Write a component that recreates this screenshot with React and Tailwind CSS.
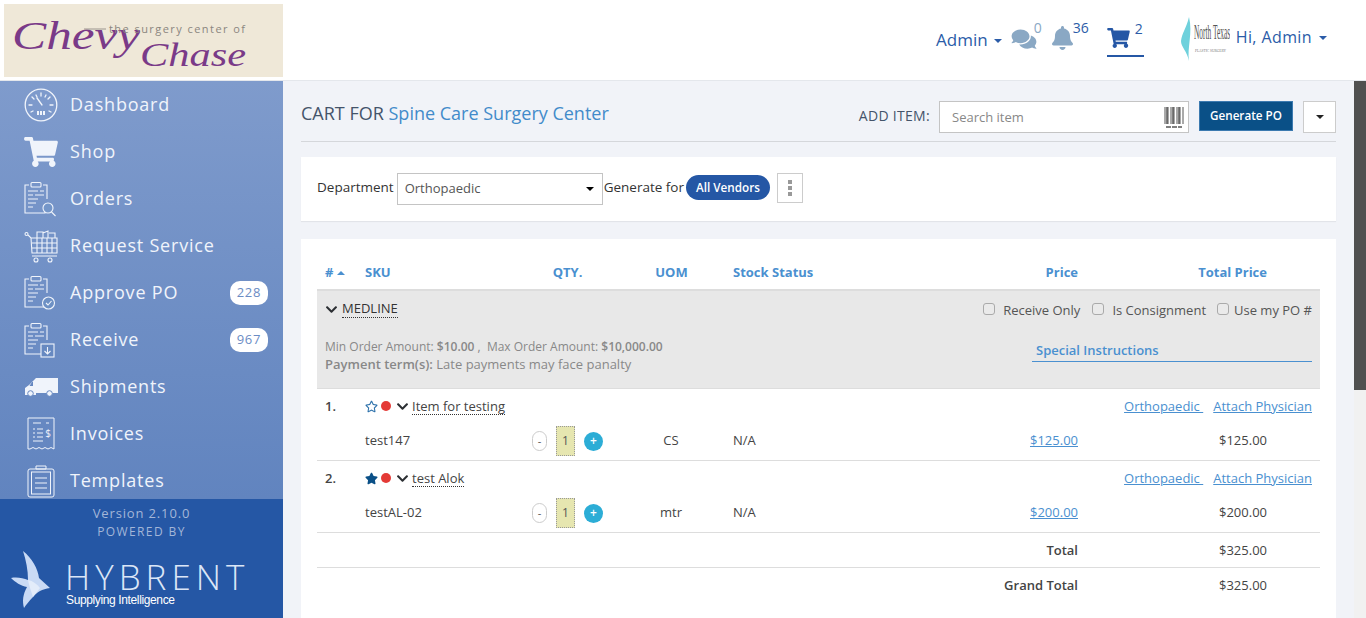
import { FaBell, FaChevronDown, FaComments, FaRegStar, FaShoppingCart, FaStar } from 'react-icons/fa'

const font = { fontFamily: '"Open Sans", "Noto Sans", sans-serif' }

function Clip({ children }) {
  return (
    <svg width="34" height="36" viewBox="4 0 34 36" fill="none" stroke="currentColor" strokeWidth="1.1" className="overflow-visible">
      <path d="M9 4H5v28h20v-6M23 4h4v14" />
      <rect x="11" y="1.500" width="10" height="4.500" rx="1" />
      <path d="M8 10h10M20 10h4M8 14h5M15 14h9M8 18h10M8 22h8M8 26h5" />
      {children}
    </svg>
  )
}

const navIcons = {
  dashboard: (
    <svg width="34" height="34" viewBox="0 0 34 34" fill="none" stroke="currentColor" strokeWidth="1.3">
      <circle cx="17" cy="17" r="15.800" />
      <path d="M17 5v3M8 9l2 2M26 9l-2 2M5 17h3M29 17h-3M7 24l2-1M27 24l-2-1M12 7l1 2M22 7l-1 2M13 10l5 7" strokeLinecap="round" />
      <path d="M13 27h2v-4h-2zM16 27h2v-4h-2zM19 27h2v-4h-2z" fill="currentColor" stroke="none" />
    </svg>
  ),
  shop: <FaShoppingCart className="w-[34px] h-[30px]" />,
  orders: (
    <Clip>
      <circle cx="28" cy="27" r="5" fill="#7496c9" />
      <path d="M31.500 31l4 4" />
    </Clip>
  ),
  service: (
    <svg width="34" height="34" viewBox="0 0 34 34" fill="none" stroke="currentColor" strokeWidth="1.1">
      <circle cx="2.500" cy="5" r="1.500" />
      <path d="M4 6l3 3h26v15H8L7 9M8 14h25M8 19h25M13 9v15M18 9v15M23 9v15M28 9v15M8 27h25" />
      <path d="M13 9V3h6v6M19 4l5-2v7M25 4h6v5" />
      <circle cx="12" cy="31" r="2" />
      <circle cx="26" cy="31" r="2" />
    </svg>
  ),
  approve: (
    <Clip>
      <circle cx="28.500" cy="28" r="6" fill="#6d90c4" />
      <path d="M26 28l2 2 3.500-4" />
    </Clip>
  ),
  receive: (
    <Clip>
      <rect x="21" y="22" width="13" height="13" fill="#6789c1" />
      <path d="M27.500 25v7M24.500 29l3 3 3-3" />
    </Clip>
  ),
  shipments: (
    <svg width="34" height="20" viewBox="0 0 34 20" fill="currentColor">
      <path d="M12 1h22v15H12v2H1v-7l4-3z" />
      <path d="M9 5v4H5.500l2.500-4z" fill="#6688c1" />
      <circle cx="6.500" cy="16.500" r="2.800" stroke="#6688c1" />
      <circle cx="25.500" cy="16.500" r="2.800" stroke="#6688c1" />
    </svg>
  ),
  invoices: (
    <svg width="30" height="34" viewBox="0 0 30 34" fill="none" stroke="currentColor" strokeWidth="1">
      <path d="M2 32V1h26v31l-3-1.500-3 1.500-3-1.500-3 1.500-3-1.500-3 1.500-3-1.500-3 1.500z" />
      <path d="M7 6h8M20 6h3M7 12h2M11 12h6M7 16h2M11 16h6M7 20h2M11 20h6M7 24h10" />
      <text x="22" y="20" fontSize="10" fill="currentColor" stroke="none" textAnchor="middle">$</text>
    </svg>
  ),
  templates: (
    <svg width="28" height="34" viewBox="0 0 28 34" fill="none" stroke="currentColor" strokeWidth="1">
      <rect x="1" y="5" width="26" height="28" rx="2" />
      <rect x="4.500" y="8" width="19" height="22" />
      <path d="M9 5V2h10v3zM8 14h12M8 19h12M8 24h12" />
    </svg>
  ),
}

const navItems = [
  { key: 'dashboard', label: 'Dashboard' },
  { key: 'shop', label: 'Shop' },
  { key: 'orders', label: 'Orders' },
  { key: 'service', label: 'Request Service' },
  { key: 'approve', label: 'Approve PO', badge: 228 },
  { key: 'receive', label: 'Receive', badge: 967 },
  { key: 'shipments', label: 'Shipments' },
  { key: 'invoices', label: 'Invoices' },
  { key: 'templates', label: 'Templates' },
]

function Caret({ className = '' }) {
  return <span className={`inline-block w-0 h-0 border-x-[4px] border-x-transparent border-t-[4px] border-t-current ${className}`} />
}

function Sidebar() {
  return (
    <aside className="w-[283px] shrink-0 flex flex-col">
      <nav className="h-[418px] overflow-hidden bg-gradient-to-b from-[#7f9bcc] to-[#6184bf]">
        {navItems.map((item) => (
          <div key={item.key} className="h-[47px] shrink-0 flex items-center text-[#f0f4fb]">
            <div className="w-[34px] ml-[24px] mr-[12px] flex justify-center shrink-0">{navIcons[item.key]}</div>
            <span className="text-[18px] tracking-[0.8px] font-normal">{item.label}</span>
            {item.badge && (
              <span className="ml-auto mr-[15px] w-[38px] h-[24px] rounded-[10px] bg-white text-[#6b8cc4] text-[13px] tracking-[0.8px] flex items-center justify-center">
                {item.badge}
              </span>
            )}
          </div>
        ))}
      </nav>
      <div className="flex-1 bg-[#2557a5] flex flex-col items-center pt-[5px] overflow-hidden">
        <p className="text-[13px] leading-[18px] tracking-[0.85px] text-[#a3b6d8]">Version 2.10.0</p>
        <p className="text-[12px] leading-[18px] tracking-[1.4px] text-[#a3b6d8] mt-[1px]">POWERED BY</p>
        <div className="self-start flex items-start pl-[11px] mt-[10px]">
          <svg width="40" height="58" viewBox="0 0 40 58" className="shrink-0">
            <path d="M12 0C21 7 27 18 28 27L39 37C31 38 26 41 22 46 18 50 15 54 13 57 11 50 12 43 16 36 10 35 4 31 0 27 6 26 12 27 17 29 17 19 15 9 12 0z" fill="#c9daf5" />
            <path d="M17 29C22 30 26 33 29 37L22 46C20 40 18 34 17 29z" fill="#e3ecfa" />
          </svg>
          <div className="ml-[15px] mt-[8px] text-[#dbe6f7]">
            <p className="text-[35px] leading-[35px] font-light tracking-[5px] -ml-[1px]">HYBRENT</p>
            <p className="text-[12px] leading-[13px] tracking-[-0.37px] text-white" style={{ fontFamily: '"Liberation Sans", sans-serif' }}>
              Supplying Intelligence
            </p>
          </div>
        </div>
      </div>
    </aside>
  )
}

function Header() {
  return (
    <header className="h-[81px] shrink-0 bg-white border-b border-[#e4e7ec] flex">
      <div className="w-[283px] pl-[4px] pt-[4px] shrink-0">
        <svg width="279" height="73" viewBox="0 0 279 73" className="bg-[#efe8d8]">
          <text x="8" y="45" fontSize="40" fontStyle="italic" fill="#7a3a88" textLength="128" lengthAdjust="spacingAndGlyphs" fontFamily='"Liberation Serif", serif'>Chevy</text>
          <text x="136" y="62" fontSize="34" fontStyle="italic" fill="#7a3a88" textLength="106" lengthAdjust="spacingAndGlyphs" fontFamily='"Liberation Serif", serif'>Chase</text>
          <path d="M80 25h22" stroke="#9a958e" strokeWidth="1" />
          <text x="105" y="29" fontSize="11" fill="#8b8680" textLength="136" fontFamily='"Open Sans", sans-serif'>the surgery center of</text>
        </svg>
      </div>
      <div className="flex-1 flex justify-end items-start text-[#2b5ca8]">
        <span className="text-[17px] leading-[24px] mt-[28px]">Admin</span>
        <Caret className="ml-[6px] mt-[39px]" />
        <FaComments className="ml-[9px] mt-[28px] w-[26px] h-[22px] text-[#8aa8c4]" />
        <span className="text-[14px] mt-[17px] text-[#8aa8c4] w-[18px] -ml-[3px]">0</span>
        <FaBell className="ml-[-1px] mt-[26px] w-[23px] h-[24px] text-[#8aa8c4]" />
        <span className="text-[14px] mt-[17px] text-[#2b5ca8] ml-[-1px]">36</span>
        <div className="ml-[18px] mt-[18px] w-[37px] h-[39px] border-b-2 border-[#2557a5] flex items-start justify-between">
          <FaShoppingCart className="mt-[10px] w-[23px] h-[20px] text-[#2557a5]" />
          <span className="text-[14px] mr-[1px]">2</span>
        </div>
        <svg width="50" height="44" viewBox="0 0 50 44" className="ml-[36px] mt-[17px]">
          <path d="M9 0C6 12 2 16 1 24c0 6 6 10 8 20C7 30 13 16 9 0z" fill="#6fd1dc" />
          <text transform="translate(14 22) scale(0.37 1)" fontSize="20" fill="#555" fontFamily='"Liberation Serif", serif'>North Texas</text>
          <text transform="translate(15 35) scale(0.7 1)" fontSize="5" fill="#777" fontFamily='"Liberation Serif", serif'>PLASTIC SURGERY</text>
        </svg>
        <span className="text-[16px] mt-[25px] ml-[6px] tracking-[0.4px]">Hi, Admin</span>
        <Caret className="ml-[7px] mt-[36px] mr-[39px]" />
      </div>
    </header>
  )
}

const gridCols = 'grid grid-cols-[48px_158px_88px_120px_169px_178px_189px_53px]'

function Qty() {
  return (
    <div className="flex items-center justify-center gap-[9px] pl-[1px]">
      <span className="w-[15px] h-[20px] rounded-[8px] border border-[#ccc] bg-white flex items-center justify-center text-[11px] text-[#555]">-</span>
      <span className="w-[19px] h-[30px] border border-dotted border-[#999] bg-[#e6e6b0] flex items-center justify-center text-[12px] text-[#555]">1</span>
      <span className="w-[19px] h-[19px] rounded-full bg-[#2cadd6] text-white flex items-center justify-center text-[12px] font-semibold">+</span>
    </div>
  )
}

function ItemRow({ no, name, sku, uom, price, starred }) {
  return (
    <div className="h-[72px] border-b border-[#ddd] text-[13px] text-[#444] relative">
      <div className={`${gridCols} pt-[8px] h-[35px] items-start`}>
        <span className="pl-2 font-semibold leading-[18px]">{no}.</span>
        <div className="col-span-5 flex items-center h-[18px]">
          {starred ? <FaStar className="w-[13px] h-[13px] text-[#0a5087]" /> : <FaRegStar className="w-[13px] h-[13px] text-[#2f73ac]" />}
          <span className="ml-[3px] w-[10px] h-[10px] rounded-full bg-[#e43a36]" />
          <FaChevronDown className="ml-[5px] w-[13px] h-[13px] text-[#2c2f33]" />
          <span className="ml-[3px] border-b border-dotted border-[#333] leading-[16px]">{name}</span>
        </div>
        <div className="col-span-2 flex justify-end gap-[10px] pr-2 leading-[18px] text-[#4a90d0]">
          <span className="underline whitespace-pre">Orthopaedic </span>
          <span className="underline">Attach Physician</span>
        </div>
      </div>
      <div className={`${gridCols} items-center h-[34px]`}>
        <span />
        <span>{sku}</span>
        <Qty />
        <span className="text-center">{uom}</span>
        <span className="pl-[2px]">N/A</span>
        <span className="text-right text-[#4a90d0] underline">{price}</span>
        <span className="text-right">{price}</span>
        <span />
      </div>
    </div>
  )
}

function Check({ label, className = '' }) {
  return (
    <span className={`flex items-center text-[13px] leading-[18px] text-[#555] ${className}`}>
      <span className="w-[12px] h-[12px] rounded-[3px] border border-[#aaa] bg-[#eaeaea] -mt-[2px]" />
      {label}
    </span>
  )
}

function Barcode() {
  return (
    <svg width="20" height="22" viewBox="0 0 20 22" stroke="#555">
      {[1, 3, 4, 7, 9, 10, 13, 15, 16, 19].map((x) => (
        <path key={x} d={`M${x} 0v17`} strokeWidth={x % 3 === 0 ? 1.5 : 1} />
      ))}
      <path d="M2 20h16" strokeWidth="1.500" strokeDasharray="5 1" />
    </svg>
  )
}

function Content() {
  return (
    <main className="flex-1 bg-[#f1f3f8] px-[18px] overflow-hidden">
      <div className="h-[61px] border-b border-[#d5d7db] flex items-start">
        <h1 className="mt-[19px] text-[18px] leading-[26px] text-[#44546a] font-normal">
          CART FOR <span className="text-[#428bca]">Spine Care Surgery Center</span>
        </h1>
        <span className="ml-auto mt-[26px] text-[14px] leading-[18px] text-[#44546a] tracking-[0.3px]">ADD ITEM:</span>
        <div className="ml-[9px] mt-[20px] w-[250px] h-[32px] bg-white border border-[#c4c4c4] flex items-center justify-between pl-[12px] pr-[4px] pt-[1px]">
          <span className="text-[13px] text-[#888]">Search item</span>
          <Barcode />
        </div>
        <button className="ml-[10px] mt-[20px] w-[94px] h-[30px] bg-[#0a5087] border border-[#3c7ab0] text-white text-[11.700px] font-semibold">Generate PO</button>
        <button className="ml-[10px] mt-[20px] w-[33px] h-[32px] bg-white border border-[#ccc] flex items-center justify-center text-[#222]">
          <Caret />
        </button>
      </div>

      <section className="mt-[15px] h-[64px] bg-white shadow-[0_1px_1px_rgba(0,0,0,0.06)] pl-[16px] flex items-start">
        <span className="mt-[21px] text-[13.500px] leading-[18px] text-[#333]">Department</span>
        <div className="ml-[3px] mt-[16px] w-[206px] h-[32px] border border-[#c4c4c4] flex items-center justify-between pl-[7px] pr-[8px] text-[13px] text-[#555]">
          Orthopaedic
          <Caret className="text-black" />
        </div>
        <span className="ml-[1px] mt-[21px] text-[13.500px] leading-[18px] text-[#333]">Generate for</span>
        <span className="ml-[2px] mt-[18px] w-[84px] h-[25px] rounded-full bg-[#2557a5] text-white text-[11.700px] font-semibold flex items-center justify-center">All Vendors</span>
        <span className="ml-[7px] mt-[16px] w-[26px] h-[30px] border border-[#ccc] flex flex-col items-center justify-center gap-[2px]">
          <i className="w-[4px] h-[4px] bg-[#999]" />
          <i className="w-[4px] h-[4px] bg-[#999]" />
          <i className="w-[4px] h-[4px] bg-[#999]" />
        </span>
      </section>

      <section className="mt-[18px] bg-white px-[16px] pt-[19px] pb-[20px]">
        <div className={`${gridCols} h-[33px] border-b-2 border-[#ddd] items-center text-[13px] font-bold text-[#4a90d0] pb-[2px]`}>
          <span className="pl-2 flex items-center gap-[4px]"># <Caret className="rotate-180" /></span>
          <span>SKU</span>
          <span className="text-center pl-[1px]">QTY.</span>
          <span className="text-center pl-[1px]">UOM</span>
          <span className="pl-[2px]">Stock Status</span>
          <span className="text-right">Price</span>
          <span className="text-right">Total Price</span>
          <span />
        </div>

        <div className="h-[98px] bg-[#e8e8e8] border-b border-[#ddd] pl-2 pr-2 flex flex-col">
          <div className="flex items-start pt-[9px] h-[46px]">
            <FaChevronDown className="w-[13px] h-[13px] mt-[3px] text-[#2c2f33]" />
            <span className="ml-[4px] text-[13px] leading-[17px] text-[#333] border-b border-dotted border-[#333]">MEDLINE</span>
            <div className="ml-auto flex">
              <Check label={<span className="ml-[8px]">Receive Only</span>} />
              <Check className="ml-[12px]" label={<span className="ml-[8px]">Is Consignment</span>} />
              <Check className="ml-[11px]" label={<span className="ml-[5px] mt-[1px]">Use my PO #</span>} />
            </div>
          </div>
          <div className="flex items-start justify-between">
            <div className="text-[12px] leading-[18px] text-[#888] pt-[1px]">
              <p>Min Order Amount: <b className="font-semibold">$10.00</b> ,&nbsp; Max Order Amount: <b className="font-semibold">$10,000.00</b></p>
              <p className="text-[13px] -mt-[1px]"><b className="font-semibold">Payment term(s):</b> Late payments may face panalty</p>
            </div>
            <div className="w-[280px] h-[21px] mt-[4px] border-b border-[#4a90d0] pl-[4px] text-[13px] leading-[18px] font-semibold text-[#4a90d0]">Special Instructions</div>
          </div>
        </div>

        <ItemRow no={1} name="Item for testing" sku="test147" uom="CS" price="$125.00" />
        <ItemRow no={2} name="test Alok" sku="testAL-02" uom="mtr" price="$200.00" starred />

        <div className={`${gridCols} h-[35px] border-b border-[#ddd] items-center text-[13px] text-[#444] pt-[1px]`}>
          <span className="col-span-6 text-right font-semibold">Total</span>
          <span className="text-right">$325.00</span>
        </div>
        <div className={`${gridCols} h-[35px] items-center text-[13px] text-[#444]`}>
          <span className="col-span-6 text-right font-semibold">Grand Total</span>
          <span className="text-right">$325.00</span>
        </div>
      </section>
    </main>
  )
}

export default function App() {
  return (
    <div className="h-[618px] w-[1366px] overflow-hidden flex flex-col bg-white" style={font}>
      <Header />
      <div className="flex flex-1 min-h-0">
        <Sidebar />
        <Content />
        <div className="w-[12px] shrink-0 bg-[#f1f1f1]">
          <div className="h-[309px] bg-[#505050]" />
        </div>
      </div>
    </div>
  )
}
